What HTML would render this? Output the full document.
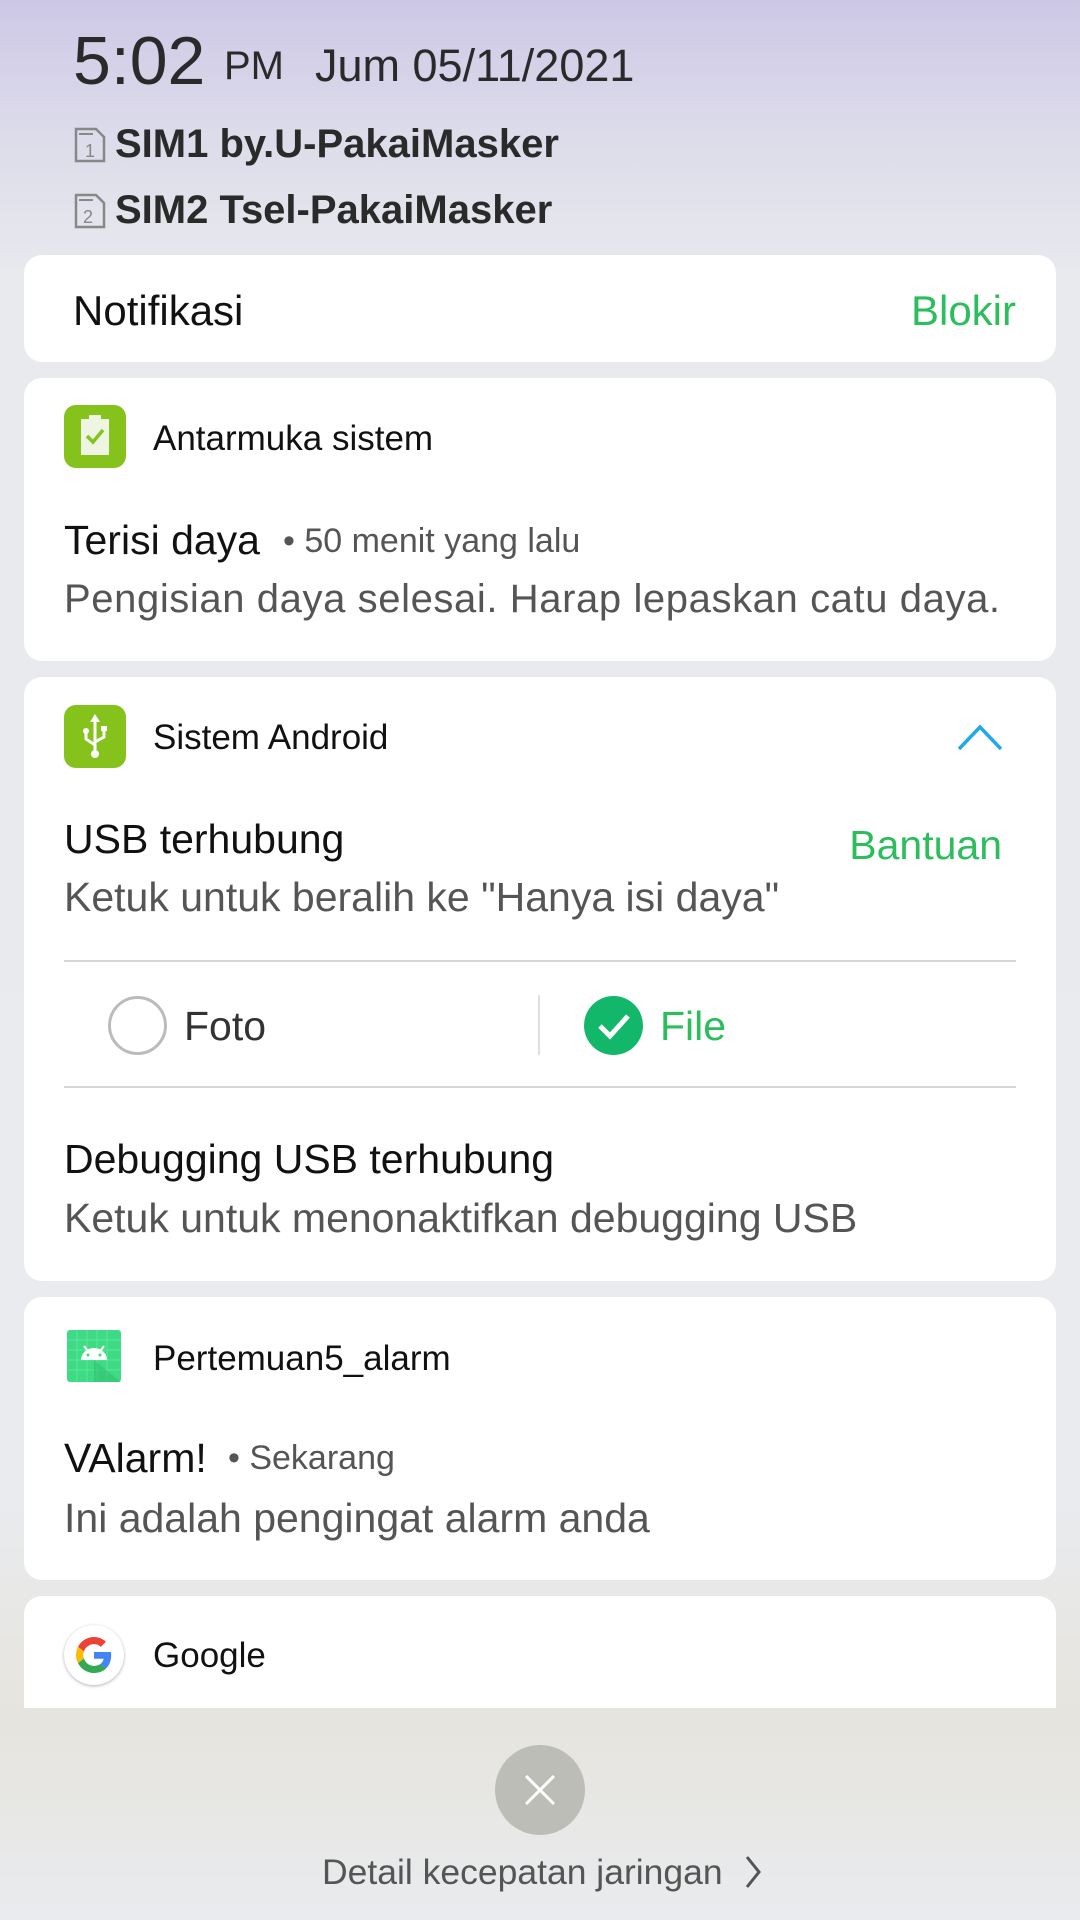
<!DOCTYPE html>
<html><head><meta charset="utf-8"><style>
*{margin:0;padding:0;box-sizing:border-box}
body{width:1080px;height:1920px;overflow:hidden;font-family:"Liberation Sans",sans-serif;position:relative;
background:linear-gradient(180deg,#cdc8e6 0px,#dcdbea 130px,#e8eaee 280px,#e9ebee 1500px,#e6e4de 1720px,#e9ebee 1920px)}
.a{position:absolute;white-space:nowrap}
.card{position:absolute;left:24px;width:1032px;background:#fff;border-radius:18px}
.t{color:#111}
.s{color:#555}
.g{color:#2cbd5c}
.line{position:absolute;left:64px;width:952px;height:2px;background:#d6d6d6}
</style></head><body>
<div class="a" style="left:73px;top:22px;font-size:68px;color:#2a2a2a;letter-spacing:0px">5:02</div>
<div class="a" style="left:224px;top:44px;font-size:40px;color:#2a2a2a">PM</div>
<div class="a" style="left:315px;top:40px;font-size:45px;color:#2a2a2a">Jum 05/11/2021</div>

<svg class="a" style="left:74px;top:127px" width="32" height="36" viewBox="0 0 32 36"><path d="M2 34V2h20l8 8v24z" fill="none" stroke="#888" stroke-width="2.5"/><path d="M5 7h14" stroke="#888" stroke-width="2"/><text x="11" y="30" font-size="18" fill="#888" font-family="Liberation Sans">1</text></svg>
<div class="a" style="left:115px;top:122px;font-size:40px;font-weight:bold;color:#2a2a2a">SIM1 by.U-PakaiMasker</div>
<svg class="a" style="left:74px;top:193px" width="32" height="36" viewBox="0 0 32 36"><path d="M2 34V2h20l8 8v24z" fill="none" stroke="#888" stroke-width="2.5"/><path d="M5 7h14" stroke="#888" stroke-width="2"/><text x="9" y="30" font-size="18" fill="#888" font-family="Liberation Sans">2</text></svg>
<div class="a" style="left:115px;top:188px;font-size:40px;font-weight:bold;color:#2a2a2a">SIM2 Tsel-PakaiMasker</div>

<div class="card" style="top:255px;height:107px"></div>
<div class="a t" style="left:73px;top:287px;font-size:42px">Notifikasi</div>
<div class="a g" style="right:64px;top:287px;font-size:42px">Blokir</div>

<div class="card" style="top:378px;height:283px"></div>
<div class="a" style="left:64px;top:405px;width:62px;height:63px;border-radius:12px;background:#86c21c"></div>
<svg class="a" style="left:64px;top:405px" width="62" height="63" viewBox="0 0 62 63"><rect x="17" y="14" width="28" height="36" fill="#eef5e2"/><rect x="25" y="10" width="12" height="5" fill="#eef5e2"/><path d="M23 31l6 6 10-12" fill="none" stroke="#86c21c" stroke-width="3.5"/></svg>
<div class="a t" style="left:153px;top:419px;font-size:35px">Antarmuka sistem</div>
<div class="a t" style="left:64px;top:517px;font-size:41px">Terisi daya</div>
<div class="a s" style="left:283px;top:522px;font-size:34px">• 50 menit yang lalu</div>
<div class="a s" style="left:64px;top:577px;font-size:40px;letter-spacing:0.6px">Pengisian daya selesai. Harap lepaskan catu daya.</div>

<div class="card" style="top:677px;height:604px"></div>
<div class="a" style="left:64px;top:705px;width:62px;height:63px;border-radius:12px;background:#86c21c"></div>
<svg class="a" style="left:64px;top:705px" width="62" height="63" viewBox="0 0 62 63"><g fill="none" stroke="#fff" stroke-width="3"><path d="M31 14v34M22 28v6l9 6M40 24v8l-9 5"/></g><path d="M31 9l-5 8h10z" fill="#fff"/><circle cx="31" cy="49" r="4" fill="#fff"/><circle cx="22" cy="26" r="3" fill="#fff"/><rect x="37" y="21" width="6" height="5" fill="#fff"/></svg>
<div class="a t" style="left:153px;top:718px;font-size:35px">Sistem Android</div>
<svg class="a" style="left:956px;top:722px" width="48" height="30" viewBox="0 0 48 30"><path d="M3 27L24 5l21 22" fill="none" stroke="#1fa9ef" stroke-width="3.5"/></svg>
<div class="a t" style="left:64px;top:816px;font-size:41px">USB terhubung</div>
<div class="a g" style="right:78px;top:822px;font-size:41px">Bantuan</div>
<div class="a s" style="left:64px;top:874px;font-size:41px">Ketuk untuk beralih ke "Hanya isi daya"</div>
<div class="line" style="top:960px"></div>
<div class="a" style="left:108px;top:996px;width:59px;height:59px;border-radius:50%;border:3px solid #bbb"></div>
<div class="a" style="left:184px;top:1003px;font-size:41px;color:#333">Foto</div>
<div class="a" style="left:538px;top:995px;width:2px;height:60px;background:#e0e0e0"></div>
<div class="a" style="left:584px;top:996px;width:59px;height:59px;border-radius:50%;background:#12b76a"></div>
<svg class="a" style="left:584px;top:996px" width="59" height="59" viewBox="0 0 59 59"><path d="M16 30l10 10 18-20" fill="none" stroke="#fff" stroke-width="5"/></svg>
<div class="a g" style="left:660px;top:1003px;font-size:41px">File</div>
<div class="line" style="top:1086px"></div>
<div class="a t" style="left:64px;top:1136px;font-size:41px">Debugging USB terhubung</div>
<div class="a s" style="left:64px;top:1195px;font-size:41px">Ketuk untuk menonaktifkan debugging USB</div>

<div class="card" style="top:1297px;height:283px"></div>
<svg class="a" style="left:67px;top:1330px" width="54" height="52" viewBox="0 0 54 52"><rect width="54" height="52" rx="3" fill="#3ddc84"/><g stroke="#5fe39a" stroke-width="1"><path d="M0 10h54M0 20h54M0 30h54M0 40h54M10 0v52M20 0v52M30 0v52M40 0v52"/></g><path d="M27 30L54 52H27z" fill="#2fb96d" opacity=".5"/><path d="M14 30a13 12 0 0 1 26 0z" fill="#fff"/><circle cx="21" cy="25" r="1.5" fill="#3ddc84"/><circle cx="33" cy="25" r="1.5" fill="#3ddc84"/><path d="M17 16l3 4M37 16l-3 4" stroke="#fff" stroke-width="2"/></svg>
<div class="a t" style="left:153px;top:1339px;font-size:35px">Pertemuan5_alarm</div>
<div class="a t" style="left:64px;top:1435px;font-size:41px">VAlarm!</div>
<div class="a s" style="left:228px;top:1439px;font-size:34px">• Sekarang</div>
<div class="a s" style="left:64px;top:1495px;font-size:41px">Ini adalah pengingat alarm anda</div>

<div style="position:absolute;left:24px;top:1596px;width:1032px;height:112px;background:#fff;border-radius:18px 18px 0 0"></div>
<div class="a" style="left:64px;top:1625px;width:60px;height:60px;border-radius:50%;background:#fff;box-shadow:0 1px 3px rgba(0,0,0,.3)"></div>
<svg class="a" style="left:76px;top:1637px" width="36" height="36" viewBox="0 0 48 48"><path fill="#EA4335" d="M24 9.5c3.5 0 6.6 1.2 9.1 3.6l6.8-6.8C35.8 2.4 30.4 0 24 0 14.6 0 6.6 5.4 2.7 13.2l7.9 6.2C12.5 13.6 17.8 9.5 24 9.5z"/><path fill="#4285F4" d="M46.9 24.5c0-1.6-.1-3.1-.4-4.5H24v9h12.9c-.6 3-2.3 5.5-4.8 7.2l7.7 6c4.5-4.2 7.1-10.4 7.1-17.7z"/><path fill="#FBBC05" d="M10.5 28.6c-.5-1.4-.8-3-.8-4.6s.3-3.2.8-4.6l-7.9-6.2C1 16.5 0 20.1 0 24s.9 7.5 2.7 10.8l7.8-6.2z"/><path fill="#34A853" d="M24 48c6.5 0 11.9-2.1 15.9-5.8l-7.7-6c-2.2 1.5-5 2.3-8.2 2.3-6.2 0-11.5-4.2-13.4-9.9l-7.9 6.2C6.6 42.6 14.6 48 24 48z"/></svg>
<div class="a t" style="left:153px;top:1636px;font-size:35px">Google</div>

<div class="a" style="left:495px;top:1745px;width:90px;height:90px;border-radius:50%;background:#bdbdb8"></div>
<svg class="a" style="left:495px;top:1745px" width="90" height="90" viewBox="0 0 90 90"><path d="M31 31l28 28M59 31L31 59" stroke="#fff" stroke-width="3"/></svg>
<div class="a" style="left:322px;top:1852px;font-size:35.5px;color:#555">Detail kecepatan jaringan</div>
<svg class="a" style="left:743px;top:1853px" width="20" height="38" viewBox="0 0 20 38"><path d="M4 4l12 15L4 34" fill="none" stroke="#555" stroke-width="3"/></svg>
</body></html>
